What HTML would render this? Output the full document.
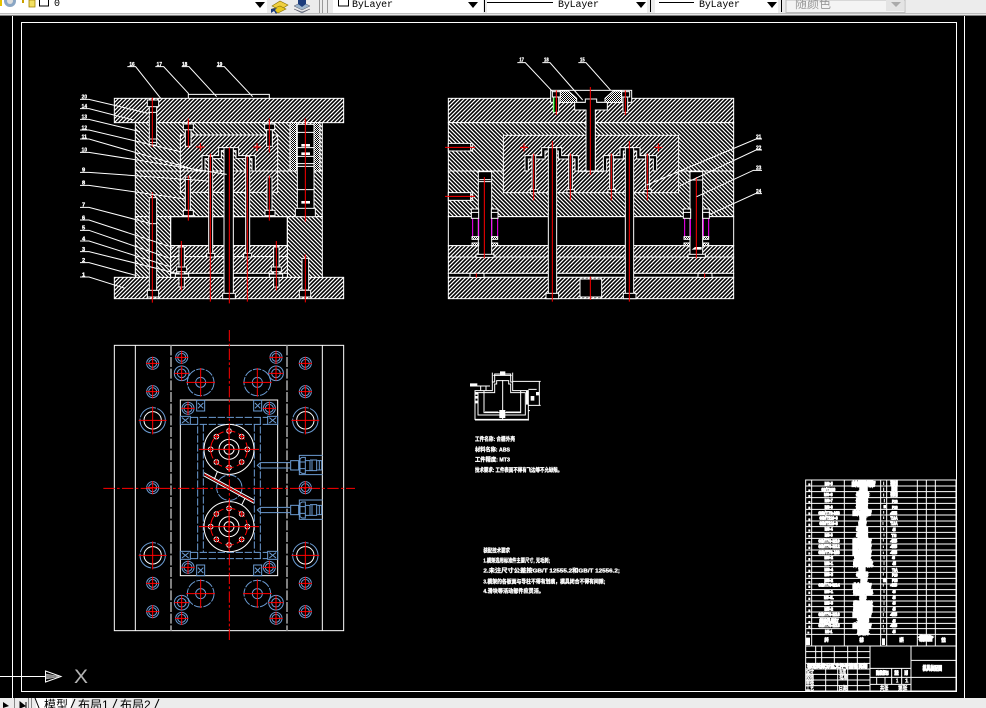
<!DOCTYPE html>
<html lang="zh">
<head>
<meta charset="utf-8">
<title>CAD</title>
<style>
html,body{margin:0;padding:0;width:986px;height:708px;overflow:hidden;background:#000}
svg{display:block}
.w{fill:none;stroke:#fff;stroke-width:3}
.k{fill:#000;stroke:#fff;stroke-width:3}
.h1{fill:url(#a);stroke:#fff;stroke-width:3}
.h2{fill:url(#b);stroke:#fff;stroke-width:3}
.d{fill:url(#c);stroke:#fff;stroke-width:3}
.r{fill:none;stroke:#f00;stroke-width:3}
.m{fill:none;stroke:#f0f;stroke-width:3}
.bl{fill:none;stroke:#6b9bd2;stroke-width:3}
.bd{fill:none;stroke:#6b9bd2;stroke-width:3;stroke-dasharray:22 5}
.cd{fill:none;stroke:#f00;stroke-width:3;stroke-dasharray:34 7 8 7}
.t{fill:#fff;stroke:#fff;stroke-width:1;font-family:"Liberation Sans","Noto Sans CJK SC",sans-serif;font-weight:700;font-size:17px}
.b{fill:#fff;stroke:#fff;stroke-width:3;font-family:"Liberation Sans","Noto Sans CJK SC",sans-serif;font-weight:700;font-size:14px}
.c{fill:#fff;stroke:#fff;stroke-width:7;font-family:"Liberation Sans","Noto Sans CJK SC",sans-serif;font-weight:700;font-size:13px}
.tb{font-family:"Liberation Mono","Noto Sans CJK SC",monospace;font-size:10px;fill:#000}
.tab{font-family:"Liberation Sans","Noto Sans CJK SC",sans-serif;font-size:12px;fill:#000}
</style>
</head>
<body>
<svg width="986" height="708" viewBox="0 0 986 708" xmlns="http://www.w3.org/2000/svg">
<defs>
<pattern id="a" patternUnits="userSpaceOnUse" width="12" height="12"><rect width="12" height="12" fill="#000"/><path d="M-3 3L3-3M0 12L12 0M9 15L15 9" stroke="#fff" stroke-width="3.6"/></pattern>
<pattern id="b" patternUnits="userSpaceOnUse" width="12" height="12"><rect width="12" height="12" fill="#000"/><path d="M-3 9L3 15M0 0L12 12M9-3L15 3" stroke="#fff" stroke-width="3.6"/></pattern>
<pattern id="c" patternUnits="userSpaceOnUse" width="6" height="6"><rect width="6" height="6" fill="#000"/><path d="M0 0h3v3h-3zM3 3h3v3h-3z" fill="#fff"/></pattern>
<g id="sb"><circle r="18" class="bl"/><circle r="12" class="bl"/><path class="r" d="M-20 0H20M0-20V20"/></g>
<g id="sb2"><circle r="22" class="bl"/><circle r="13" class="bl"/><path class="r" d="M-22 0H22M0-22V22"/></g>
<g id="big"><circle r="38" class="bl" stroke-dasharray="60 4"/><circle r="26" class="w"/><path class="r" d="M-42 0H42M0-42V42"/></g>
<g id="ret"><circle r="40" class="bl" stroke-dasharray="25 4"/><circle r="15" class="bl"/><path class="r" d="M-43 0H43M0-43V43"/></g>
<g id="hole"><circle r="7" class="k"/><path class="r" d="M-9 0H9M0-9V9"/></g>
<g id="pad"><rect x="-12" y="-16" width="24" height="32" class="bl" stroke-width="4"/><path class="bl" d="M-8-8L8 8M8-8L-8 8"/></g>
<g id="padh"><rect x="-15" y="-12" width="30" height="24" class="bl"/><path class="bl" d="M-10-8L10 8M10-8L-10 8"/></g>
<g id="gate">
<circle r="75" class="w"/><circle r="30" class="w"/><circle r="15" class="w"/>
<circle r="55" class="r" stroke-dasharray="26 10"/>
<path class="r" d="M-90 0H90M0-68V68"/>
<use href="#hole" x="55" y="0"/><use href="#hole" x="-55" y="0"/><use href="#hole" x="0" y="55"/><use href="#hole" x="0" y="-55"/>
<use href="#hole" x="38" y="38"/><use href="#hole" x="-38" y="38"/><use href="#hole" x="38" y="-38"/><use href="#hole" x="-38" y="-38"/>
</g>
<g id="conn">
<path class="bl" d="M481 20L472 28L481 36H570M481 20H570"/>
<rect x="572" y="14" width="24" height="28" class="bl" stroke-width="6"/>
<path class="bl" d="M668-2H598V56H668"/>
<path class="bl" d="M600 8L606 4H616V52H606L600 48ZM600 18H616M600 38H616M616 14H630V44H616M630 12H650V44H630M636 12V44M652 14H665V42H652M658 14V42"/>
</g>
</defs>

<rect width="986" height="708" fill="#000"/>

<!-- Frame -->
<rect x="21.5" y="22.5" width="935" height="669" fill="none" stroke="#fff"/>
<path d="M12.5 16V698M964.5 16V698" stroke="#fff"/>
<!-- UCS -->
<path d="M0 676.5H45.5" stroke="#fff"/>
<path d="M45.5 671V682L61 676.5Z" fill="none" stroke="#fff"/>
<path d="M46 674L60 676.5L46 679" fill="#888" stroke="#ccc" stroke-width=".6"/>
<text x="74" y="683" font-family="Liberation Sans,sans-serif" font-size="19" fill="#fff" fill-opacity=".7" textLength="14" lengthAdjust="spacingAndGlyphs">X</text>

<!-- LEFT SECTION -->
<g transform="translate(70 55) scale(.33333)">
<rect x="133" y="130" width="688" height="73" class="h1"/>
<rect x="133" y="667" width="688" height="64" class="h1"/>
<rect x="196" y="203" width="561" height="145" class="h2"/>
<rect x="196" y="348" width="561" height="137" class="h2"/>
<rect x="196" y="485" width="106" height="182" class="h2"/>
<rect x="652" y="485" width="105" height="182" class="h2"/>
<rect x="302" y="485" width="350" height="87" fill="#000" class="w"/>
<rect x="302" y="572" width="350" height="33" class="h1"/>
<rect x="302" y="605" width="350" height="50" class="h1"/>
<rect x="302" y="655" width="350" height="12" class="k"/>
<rect x="331" y="240" width="292" height="172" class="h1"/>
<path class="w" d="M196 348H757"/>
<path class="k" d="M396 348V302H446V278H506V302H556V348Z"/>
<path class="h2" d="M405 348V311H454V287H498V311H546V348Z"/>
<path class="w" d="M400 412H556"/>
<rect x="462" y="278" width="28" height="448" class="k"/>
<rect x="458" y="715" width="38" height="16" class="k"/>
<rect x="416" y="304" width="12" height="294" class="k"/><rect x="410" y="595" width="24" height="11" class="k"/>
<rect x="527" y="304" width="12" height="294" class="k"/><rect x="521" y="595" width="24" height="11" class="k"/>
<!-- bolts -->
<rect x="238" y="152" width="22" height="118" class="k"/><rect x="232" y="135" width="34" height="20" class="k"/><path class="w" d="M238 172H260M240 252H258M240 262H258"/>
<rect x="238" y="428" width="22" height="280" class="k"/><rect x="232" y="706" width="34" height="20" class="k"/><path class="w" d="M238 506H260"/>
<rect x="346" y="224" width="17" height="50" class="k"/><rect x="340" y="207" width="30" height="17" class="k"/>
<rect x="590" y="224" width="17" height="50" class="k"/><rect x="584" y="207" width="30" height="17" class="k"/>
<rect x="346" y="366" width="15" height="100" class="k"/><rect x="340" y="466" width="30" height="16" class="k"/>
<rect x="591" y="366" width="15" height="100" class="k"/><rect x="585" y="466" width="30" height="16" class="k"/>
<rect x="327" y="576" width="16" height="120" class="k"/><rect x="320" y="636" width="30" height="14" class="k"/><rect x="316" y="657" width="40" height="10" class="k"/>
<rect x="611" y="576" width="16" height="120" class="k"/><rect x="604" y="636" width="30" height="14" class="k"/><rect x="598" y="657" width="40" height="10" class="k"/>
<rect x="696" y="610" width="20" height="95" class="k"/><rect x="688" y="706" width="34" height="20" class="k"/>
<!-- spring guide column -->
<rect x="660" y="203" width="20" height="145" class="d"/>
<rect x="732" y="203" width="18" height="145" class="d"/>
<rect x="682" y="208" width="50" height="256" class="k"/>
<rect x="676" y="460" width="60" height="25" class="k"/>
<path class="w" d="M682 232H732M682 278H732M682 304H732M682 326H732M682 334H732M682 404H732"/>
<path d="M694 275h26v-8h-26zM694 300h26v-8h-26zM694 446h26v-8h-26z" fill="#fff"/>
<!-- red center lines -->
<path class="r" d="M247 128V276M247 412V743M355 190V278M355 362V497M598 190V292M598 362V497M421 296V740M478 278V745M532 304V740M706 190V500M706 598V742M334 558V706M619 558V706"/>
<path class="r" d="M378 276H404M391 264V288M549 276H573M561 264V288"/>
<!-- leaders -->
<path class="w" stroke-width="2.5" d="M172 35H197L272 130M256 35H281L355 115V130M355 118H598V130M335 35H357L440 125M440 35H463L548 125
M30 133H57L235 175M30 161H57L190 195M30 193H57L210 230M30 225H57L330 290M30 252H57L395 350M30 292H57L470 358M30 352H57L415 378M30 391H57L345 432M30 457H57L240 505M30 495H57L310 578M30 526H57L300 610M30 558H57L300 635M30 590H57L320 655M30 623H57L200 662M30 666H57L165 700"/>
<text class="t" x="178" y="33" textLength="16" lengthAdjust="spacingAndGlyphs">16</text>
<text class="t" x="260" y="33" textLength="16" lengthAdjust="spacingAndGlyphs">17</text>
<text class="t" x="336" y="33" textLength="16" lengthAdjust="spacingAndGlyphs">18</text>
<text class="t" x="441" y="33" textLength="16" lengthAdjust="spacingAndGlyphs">19</text>
<text class="t" x="35" y="131" textLength="16" lengthAdjust="spacingAndGlyphs">20</text>
<text class="t" x="35" y="159" textLength="16" lengthAdjust="spacingAndGlyphs">14</text>
<text class="t" x="35" y="191" textLength="16" lengthAdjust="spacingAndGlyphs">13</text>
<text class="t" x="35" y="223" textLength="16" lengthAdjust="spacingAndGlyphs">12</text>
<text class="t" x="35" y="250" textLength="16" lengthAdjust="spacingAndGlyphs">11</text>
<text class="t" x="35" y="290" textLength="16" lengthAdjust="spacingAndGlyphs">10</text>
<text class="t" x="36" y="350">9</text><text class="t" x="36" y="389">8</text><text class="t" x="36" y="455">7</text><text class="t" x="36" y="493">6</text><text class="t" x="36" y="524">5</text><text class="t" x="36" y="556">4</text><text class="t" x="36" y="588">3</text><text class="t" x="36" y="621">2</text><text class="t" x="36" y="664">1</text>
</g>

<!-- RIGHT SECTION -->
<g transform="translate(440 55) scale(.33333)">
<rect x="25" y="130" width="856" height="73" class="h1"/>
<rect x="25" y="203" width="856" height="145" class="h2"/>
<rect x="25" y="348" width="856" height="137" class="h2"/>
<rect x="25" y="485" width="856" height="87" class="k"/>
<rect x="25" y="572" width="856" height="34" class="h1"/>
<rect x="25" y="606" width="856" height="49" class="h1"/>
<rect x="25" y="655" width="856" height="12" class="k"/>
<rect x="25" y="667" width="856" height="64" class="h1"/>
<rect x="190" y="241" width="526" height="172" class="h1"/>
<path class="w" d="M25 348H190M716 348H881"/>
<path class="k" d="M255 348V302H305V278H365V302H415V348H490V302H540V278H600V302H650V348H640V312H590V288H550V312H500V348H405V312H355V288H315V312H265V348Z"/>
<!-- sprue/locating ring -->
<rect x="332" y="106" width="243" height="36" class="k"/>
<path class="d" d="M360 108H385L410 130V142H360ZM545 108H520L495 130V142H545Z"/>
<path class="k" d="M404 142V165H438V348H466V165H502V142H470V132H436V142Z"/>
<rect x="337" y="110" width="24" height="16" class="k"/><rect x="545" y="110" width="24" height="16" class="k"/>
<rect x="340" y="126" width="16" height="46" class="k"/><rect x="549" y="126" width="14" height="46" class="k"/>
<path stroke="#0f0" stroke-width="3" d="M342 128V172"/>
<rect x="415" y="348" width="75" height="1" class="w"/>
<!-- side ports -->
<path class="k" d="M25 265H92V288H25Z"/><path class="w" d="M92 265H98V288H92"/>
<path class="k" d="M25 413H92V436H25Z"/><path class="w" d="M92 411H98V436H92"/>
<!-- guide posts -->
<rect x="115" y="350" width="40" height="250" class="k"/><rect x="108" y="598" width="54" height="9" class="k"/><path class="w" d="M115 380H155M118 374H152"/>
<rect x="750" y="350" width="38" height="250" class="k"/><rect x="744" y="598" width="52" height="9" class="k"/><path class="w" d="M750 375H788"/>
<path d="M755 584h30v-8h-20z" fill="#fff"/>
<!-- springs -->
<path class="m" d="M98 490V545M116 490V545M155 490V545M173 490V545M734 490V545M751 490V545M790 490V545M806 490V545"/>
<rect x="94" y="462" width="22" height="28" class="k"/><rect x="154" y="462" width="20" height="28" class="k"/><rect x="730" y="462" width="22" height="28" class="k"/><rect x="788" y="462" width="20" height="28" class="k"/>
<path class="w" d="M94 472H116M154 472H174M730 472H752M788 472H808"/>
<rect x="96" y="545" width="20" height="8" class="d"/><rect x="155" y="545" width="18" height="8" class="d"/><rect x="732" y="545" width="18" height="8" class="d"/><rect x="790" y="545" width="16" height="8" class="d"/>
<rect x="96" y="564" width="20" height="8" class="d"/><rect x="155" y="564" width="18" height="8" class="d"/><rect x="732" y="564" width="18" height="8" class="d"/><rect x="790" y="564" width="16" height="8" class="d"/>
<!-- large ejector pillars -->
<rect x="325" y="278" width="25" height="438" class="k"/><rect x="318" y="715" width="38" height="16" class="k"/>
<rect x="556" y="278" width="25" height="438" class="k"/><rect x="550" y="715" width="38" height="16" class="k"/>
<!-- small pins -->
<rect x="276" y="300" width="11" height="106" class="k"/><rect x="271" y="404" width="22" height="9" class="k"/>
<rect x="386" y="300" width="11" height="106" class="k"/><rect x="381" y="404" width="22" height="9" class="k"/>
<rect x="509" y="300" width="11" height="106" class="k"/><rect x="504" y="404" width="22" height="9" class="k"/>
<rect x="617" y="300" width="11" height="106" class="k"/><rect x="612" y="404" width="22" height="9" class="k"/>
<rect x="420" y="672" width="65" height="54" class="k"/>
<path class="k" d="M90 655H132V667H90ZM774 655H816V667H774Z"/>
<!-- red -->
<path class="r" d="M337 258V740M568 258V740M451 96V360M451 664V735M133 366V610M769 366V610M281 296V436M391 296V436M514 296V436M622 296V436M349 106V180M556 106V180M109 655V668M794 655V668"/>
<path class="r" d="M15 277H105M15 424H105M240 277H264M252 265V289M643 277H667M655 265V289"/>
<!-- leaders -->
<path class="w" stroke-width="2.5" d="M232 23H256L338 110M307 23H330L428 135M415 23H438L512 106M966 252H948L620 390M966 285H948L720 392M966 346H940L770 425M966 416H946L810 478"/>
<text class="t" x="238" y="20" textLength="14" lengthAdjust="spacingAndGlyphs">17</text>
<text class="t" x="312" y="20" textLength="14" lengthAdjust="spacingAndGlyphs">18</text>
<text class="t" x="420" y="20" textLength="14" lengthAdjust="spacingAndGlyphs">15</text>
<text class="t" x="948" y="250" textLength="16" lengthAdjust="spacingAndGlyphs">21</text>
<text class="t" x="948" y="283" textLength="16" lengthAdjust="spacingAndGlyphs">22</text>
<text class="t" x="948" y="344" textLength="16" lengthAdjust="spacingAndGlyphs">23</text>
<text class="t" x="948" y="414" textLength="16" lengthAdjust="spacingAndGlyphs">24</text>
</g>

<!-- PLAN VIEW -->
<g transform="translate(100 330) scale(.33333)">
<rect x="43" y="46" width="688" height="856" class="w"/>
<path class="w" d="M106 46V902M667 46V902"/>
<path d="M213 46V902M561 46V902" stroke="#808080" stroke-width="6" stroke-dasharray="30 5" fill="none"/>
<rect x="241" y="210" width="292" height="527" class="w"/>
<path class="bd" d="M293 262V686M310 283V666M463 283V666M481 262V686M272 262H503M272 283H503M272 667H503M272 686H503"/>
<circle cx="388" cy="473" r="38" class="bl" stroke-dasharray="30 4"/>
<use href="#gate" x="387" y="358"/>
<use href="#gate" x="387" y="590"/>
<path class="w" d="M312 428L462 510M312 438L462 520M352 425L342 450M425 525L435 505"/>
<path class="r" d="M314 433L460 515" stroke-width="4"/>
<path class="cd" d="M388 0V930M10 475H765" stroke-width="3.6"/>
<use href="#sb" x="158" y="100"/><use href="#sb" x="158" y="185"/><use href="#sb" x="158" y="473"/><use href="#sb" x="158" y="760"/><use href="#sb" x="158" y="845"/>
<use href="#sb" x="616" y="100"/><use href="#sb" x="616" y="185"/><use href="#sb" x="616" y="473"/><use href="#sb" x="616" y="760"/><use href="#sb" x="616" y="845"/>
<use href="#sb" x="245" y="82"/><use href="#sb" x="528" y="82"/><use href="#sb" x="245" y="865"/><use href="#sb" x="528" y="865"/>
<use href="#sb2" x="245" y="130"/><use href="#sb2" x="528" y="130"/><use href="#sb2" x="245" y="818"/><use href="#sb2" x="528" y="818"/>
<use href="#sb" x="264" y="235"/><use href="#sb" x="508" y="235"/><use href="#sb" x="264" y="712"/><use href="#sb" x="508" y="712"/>
<use href="#big" x="158" y="271"/><use href="#big" x="616" y="271"/><use href="#big" x="158" y="676"/><use href="#big" x="616" y="676"/>
<use href="#ret" x="302" y="157"/><use href="#ret" x="472" y="157"/><use href="#ret" x="302" y="791"/><use href="#ret" x="472" y="791"/>
<use href="#pad" x="302" y="227"/><use href="#pad" x="473" y="227"/><use href="#pad" x="302" y="721"/><use href="#pad" x="473" y="721"/>
<use href="#padh" x="256" y="271"/><use href="#padh" x="518" y="271"/><use href="#padh" x="256" y="676"/><use href="#padh" x="518" y="676"/>
<use href="#conn" x="0" y="378"/><use href="#conn" x="0" y="512"/>
</g>

<!-- PART + NOTES -->
<g transform="translate(460 370) scale(.33333)">
<path class="w" d="M45 148V62H97V36H104V12H152V36H158V62H205V148Z"/>
<path class="w" d="M54 135V68H104V42H110V32H146V42H152V68H196V135Z"/>
<path class="w" d="M97 8V36M158 8V36M100 16H155M158 34H242M205 106H242M238 34V106M205 58H230M205 122H210M45 150H207M72 62V128H182V62M75 126H115M138 126H182M128 30V148"/>
<path d="M120 4h16v12h-16zM30 40h22v7H30zM46 66h8v8h-8zM46 78h8v8h-8zM46 92h8v8h-8zM212 78h11v14h-11zM228 66h10v10h-10zM118 120h18v24h-18zM198 62h7v42h-7z" fill="#fff"/>
<path class="w" d="M62 48V62M78 48V62M30 48H90"/>
<text class="t" x="45" y="213" textLength="120" lengthAdjust="spacingAndGlyphs">工件名称: 合棚外壳</text>
<text class="t" x="45" y="244" textLength="105" lengthAdjust="spacingAndGlyphs">材料名称: ABS</text>
<text class="t" x="45" y="275" textLength="105" lengthAdjust="spacingAndGlyphs">工件精度: MT3</text>
<text class="t" x="45" y="306" textLength="262" lengthAdjust="spacingAndGlyphs">技术要求: 工件表面不得有飞边等不允缺陷。</text>
<text class="t" x="70" y="547" textLength="80" lengthAdjust="spacingAndGlyphs">装配技术要求</text>
<text class="t" x="70" y="578" textLength="200" lengthAdjust="spacingAndGlyphs">1.模架选用标准件主要尺寸, 无毛刺;</text>
<text class="t" x="70" y="608" textLength="410" lengthAdjust="spacingAndGlyphs">2.未注尺寸公差按GB/T 12555.2和GB/T 12556.2;</text>
<text class="t" x="70" y="640" textLength="366" lengthAdjust="spacingAndGlyphs">3.模架的各板面与导柱不得有划痕，模具闭合不得有间隙;</text>
<text class="t" x="70" y="669" textLength="182" lengthAdjust="spacingAndGlyphs">4.滑块等活动部件应灵活。</text>
</g>

<!-- TITLE BLOCK -->
<g transform="translate(800 475) scale(.33333)">
<rect x="17" y="15" width="451" height="633" class="w"/>
<path class="w" d="M17 33H468M17 50H468M17 68H468M17 85H468M17 103H468M17 120H468M17 138H468M17 155H468M17 172H468M17 190H468M17 207H468M17 225H468M17 242H468M17 258H468M17 275H468M17 292H468M17 310H468M17 327H468M17 344H468M17 361H468M17 378H468M17 395H468M17 411H468M17 428H468M17 445H468M17 461H468M17 478H468"/>
<path class="k" d="M17 513H468"/>
<path class="w" d="M35 15V513M133 15V513M242 15V513M260 15V513M352 15V513M379 15V513M406 15V513"/>
<path class="w" d="M17 530H210M17 548H210M17 565H210M17 582H210M17 598H210M17 615H210M17 632H210M47 513V565M77 582V648M65 513V565M103 513V565M113 565V648M143 513V648M172 513V648M210 513V648M333 513V648M210 580H333M210 607H333M210 628H333M275 580V628M305 580V628M230 607V628M255 607V628M333 556H468M333 607H468"/>
<text class="b" x="74" y="30" textLength="24" lengthAdjust="spacingAndGlyphs">M8-5</text><text class="c" x="156" y="32" textLength="69" lengthAdjust="spacingAndGlyphs">内六角圆柱头螺钉</text><text class="b" x="271" y="30" textLength="22" lengthAdjust="spacingAndGlyphs">碳素钢</text>
<text class="b" x="64" y="48" textLength="42" lengthAdjust="spacingAndGlyphs">GB/T2089</text><text class="c" x="180" y="50" textLength="21" lengthAdjust="spacingAndGlyphs">弹簧</text><text class="b" x="274" y="47" textLength="18" lengthAdjust="spacingAndGlyphs">弹钢</text>
<text class="b" x="72" y="63" textLength="26" lengthAdjust="spacingAndGlyphs">M8-8</text><text class="c" x="171" y="64" textLength="33" lengthAdjust="spacingAndGlyphs">导套</text><text class="b" x="271" y="63" textLength="22" lengthAdjust="spacingAndGlyphs">碳素钢</text>
<text class="b" x="74" y="81" textLength="24" lengthAdjust="spacingAndGlyphs">M8-7</text><text class="c" x="171" y="83" textLength="30" lengthAdjust="spacingAndGlyphs">型腔</text><text class="b" x="276" y="84" textLength="17" lengthAdjust="spacingAndGlyphs">P20</text>
<text class="b" x="74" y="100" textLength="24" lengthAdjust="spacingAndGlyphs">M8-6</text><text class="c" x="171" y="101" textLength="30" lengthAdjust="spacingAndGlyphs">型芯</text><text class="b" x="276" y="102" textLength="17" lengthAdjust="spacingAndGlyphs">P20</text>
<text class="b" x="55" y="118" textLength="64" lengthAdjust="spacingAndGlyphs">GB/T70-M8</text><text class="c" x="159" y="118" textLength="54" lengthAdjust="spacingAndGlyphs">内六角螺钉</text><text class="b" x="271" y="118" textLength="20" lengthAdjust="spacingAndGlyphs">45</text>
<text class="b" x="58" y="133" textLength="55" lengthAdjust="spacingAndGlyphs">GB/T119-6</text><text class="c" x="180" y="135" textLength="18" lengthAdjust="spacingAndGlyphs">销钉</text><text class="b" x="271" y="133" textLength="22" lengthAdjust="spacingAndGlyphs">T10A</text>
<text class="b" x="58" y="150" textLength="55" lengthAdjust="spacingAndGlyphs">GB/T119-8</text><text class="c" x="177" y="152" textLength="21" lengthAdjust="spacingAndGlyphs">销钉</text><text class="b" x="271" y="150" textLength="22" lengthAdjust="spacingAndGlyphs">T10A</text>
<text class="b" x="74" y="167" textLength="24" lengthAdjust="spacingAndGlyphs">M8-4</text><text class="c" x="171" y="168" textLength="30" lengthAdjust="spacingAndGlyphs">导柱</text><text class="b" x="277" y="168" textLength="10" lengthAdjust="spacingAndGlyphs">45</text>
<text class="b" x="74" y="184" textLength="24" lengthAdjust="spacingAndGlyphs">M8-3</text><text class="c" x="171" y="186" textLength="30" lengthAdjust="spacingAndGlyphs">导柱</text><text class="b" x="274" y="186" textLength="15" lengthAdjust="spacingAndGlyphs">T8</text>
<text class="b" x="55" y="202" textLength="64" lengthAdjust="spacingAndGlyphs">GB/T70-M10</text><text class="c" x="159" y="204" textLength="54" lengthAdjust="spacingAndGlyphs">内六角螺钉</text><text class="b" x="271" y="202" textLength="20" lengthAdjust="spacingAndGlyphs">45</text>
<text class="b" x="55" y="219" textLength="64" lengthAdjust="spacingAndGlyphs">GB/T70-M12</text><text class="c" x="159" y="221" textLength="54" lengthAdjust="spacingAndGlyphs">内六角螺钉</text><text class="b" x="271" y="219" textLength="20" lengthAdjust="spacingAndGlyphs">45</text>
<text class="b" x="55" y="237" textLength="64" lengthAdjust="spacingAndGlyphs">GB/T70-M6</text><text class="c" x="159" y="238" textLength="54" lengthAdjust="spacingAndGlyphs">内六角螺钉</text><text class="b" x="271" y="237" textLength="20" lengthAdjust="spacingAndGlyphs">45</text>
<text class="b" x="73" y="252" textLength="26" lengthAdjust="spacingAndGlyphs">M8-2</text><text class="c" x="165" y="254" textLength="45" lengthAdjust="spacingAndGlyphs">定模板</text><text class="b" x="276" y="252" textLength="9" lengthAdjust="spacingAndGlyphs">45</text>
<text class="b" x="73" y="270" textLength="26" lengthAdjust="spacingAndGlyphs">M8-1</text><text class="c" x="162" y="272" textLength="54" lengthAdjust="spacingAndGlyphs">动模垫板</text><text class="b" x="277" y="270" textLength="11" lengthAdjust="spacingAndGlyphs">45</text>
<text class="b" x="73" y="288" textLength="26" lengthAdjust="spacingAndGlyphs">M6-4</text><text class="c" x="177" y="289" textLength="18" lengthAdjust="spacingAndGlyphs">垫圈</text><text class="b" x="276" y="289" textLength="17" lengthAdjust="spacingAndGlyphs">T8A</text>
<text class="b" x="73" y="303" textLength="26" lengthAdjust="spacingAndGlyphs">M6-3</text><text class="c" x="171" y="305" textLength="30" lengthAdjust="spacingAndGlyphs">导套</text><text class="b" x="276" y="305" textLength="17" lengthAdjust="spacingAndGlyphs">P20</text>
<text class="b" x="73" y="321" textLength="26" lengthAdjust="spacingAndGlyphs">M6-2</text><text class="c" x="183" y="323" textLength="18" lengthAdjust="spacingAndGlyphs">螺钉</text><text class="b" x="276" y="321" textLength="17" lengthAdjust="spacingAndGlyphs">P20</text>
<text class="b" x="55" y="335" textLength="64" lengthAdjust="spacingAndGlyphs">GB/T70-M14</text><text class="c" x="159" y="337" textLength="54" lengthAdjust="spacingAndGlyphs">内六角螺钉</text><text class="b" x="271" y="335" textLength="20" lengthAdjust="spacingAndGlyphs">45</text>
<text class="b" x="73" y="354" textLength="26" lengthAdjust="spacingAndGlyphs">M6-1</text><text class="c" x="162" y="355" textLength="54" lengthAdjust="spacingAndGlyphs">动模支架</text><text class="b" x="277" y="354" textLength="10" lengthAdjust="spacingAndGlyphs">45</text>
<text class="b" x="72" y="372" textLength="29" lengthAdjust="spacingAndGlyphs">M5-4L</text><text class="c" x="180" y="373" textLength="18" lengthAdjust="spacingAndGlyphs">推杆</text><text class="b" x="277" y="372" textLength="10" lengthAdjust="spacingAndGlyphs">45</text>
<text class="b" x="73" y="389" textLength="26" lengthAdjust="spacingAndGlyphs">M5-3</text><text class="c" x="162" y="391" textLength="54" lengthAdjust="spacingAndGlyphs">推杆固定板</text><text class="b" x="277" y="389" textLength="10" lengthAdjust="spacingAndGlyphs">45</text>
<text class="b" x="73" y="406" textLength="26" lengthAdjust="spacingAndGlyphs">M5-2</text><text class="c" x="162" y="408" textLength="54" lengthAdjust="spacingAndGlyphs">推板导柱固</text><text class="b" x="277" y="406" textLength="10" lengthAdjust="spacingAndGlyphs">45</text>
<text class="b" x="55" y="423" textLength="64" lengthAdjust="spacingAndGlyphs">GB/T70-M16</text><text class="c" x="159" y="425" textLength="54" lengthAdjust="spacingAndGlyphs">内六角螺钉</text><text class="b" x="271" y="423" textLength="20" lengthAdjust="spacingAndGlyphs">45</text>
<text class="b" x="58" y="443" textLength="58" lengthAdjust="spacingAndGlyphs">螺纹孔螺钉</text><text class="c" x="174" y="443" textLength="30" lengthAdjust="spacingAndGlyphs">顶杆</text><text class="b" x="277" y="443" textLength="10" lengthAdjust="spacingAndGlyphs">45</text>
<text class="b" x="55" y="456" textLength="64" lengthAdjust="spacingAndGlyphs">GB/T70-M18</text><text class="c" x="159" y="458" textLength="54" lengthAdjust="spacingAndGlyphs">内六角螺钉</text><text class="b" x="271" y="456" textLength="20" lengthAdjust="spacingAndGlyphs">45</text>
<text class="b" x="75" y="474" textLength="22" lengthAdjust="spacingAndGlyphs">M5-1</text><text class="c" x="174" y="476" textLength="30" lengthAdjust="spacingAndGlyphs">底板</text><text class="b" x="277" y="474" textLength="10" lengthAdjust="spacingAndGlyphs">45</text>
<!-- index column -->
<path stroke="#fff" stroke-width="6" fill="none" d="M28 25V32M28 43V50M28 60V67M28 78V85M28 95V102M28 112V119M28 130V137M28 146V153M28 163V170M28 180V187M28 198V205M28 215V222M28 232V239M28 249V256M28 266V273M28 284V291M28 300V307M28 318V325M28 332V339M28 350V357M28 368V375M28 386V393M28 403V410M28 420V427M28 438V444M28 452V459M25 470V476"/>
<path stroke="#fff" stroke-width="3" fill="none" d="M251 20V30M251 38V48M251 55V65M253 72V82M253 92V100M251 108V116M251 124V132M249 141V150M251 158V166M252 176V184M250 192V200M250 212V219M250 230V237M252 243V252M252 260V270M252 278V286M250 294V302M250 310V320M250 326V335M252 345V354M252 362V372M252 380V390M252 398V408M250 414V424M250 434V442M250 450V458M252 464V472"/>
<path d="M250 90h8v10h-8zM249 310h10v12h-10zM246 490h9v20h-9zM18 488h12v22H18z" fill="#fff"/>
<text class="b" x="73" y="500" textLength="13" lengthAdjust="spacingAndGlyphs">序号</text><text class="b" x="178" y="500" textLength="13" lengthAdjust="spacingAndGlyphs">名称</text><text class="b" x="298" y="500" textLength="13" lengthAdjust="spacingAndGlyphs">材料</text><text class="c" x="360" y="495" textLength="36" lengthAdjust="spacingAndGlyphs">数量备</text><text class="b" x="424" y="500" textLength="13" lengthAdjust="spacingAndGlyphs">备注</text>
<text class="b" x="22" y="577" textLength="180" lengthAdjust="spacingAndGlyphs">标记处数分区文件号签名日期</text>
<text class="t" x="18" y="595" textLength="24" lengthAdjust="spacingAndGlyphs">设计</text><text class="t" x="18" y="612" textLength="24" lengthAdjust="spacingAndGlyphs">校核</text><text class="t" x="18" y="629" textLength="24" lengthAdjust="spacingAndGlyphs">审核</text><text class="t" x="18" y="645" textLength="24" lengthAdjust="spacingAndGlyphs">工艺</text>
<text class="t" x="118" y="595" textLength="20" lengthAdjust="spacingAndGlyphs">标准</text><text class="t" x="118" y="612" textLength="24" lengthAdjust="spacingAndGlyphs">批准</text><text class="t" x="116" y="645" textLength="26" lengthAdjust="spacingAndGlyphs">日期</text>
<text class="b" x="228" y="599" textLength="38" lengthAdjust="spacingAndGlyphs">阶段标记</text><text class="b" x="283" y="599" textLength="13" lengthAdjust="spacingAndGlyphs">重量</text><text class="b" x="313" y="599" textLength="11" lengthAdjust="spacingAndGlyphs">比例</text>
<text class="t" x="288" y="622" textLength="7" lengthAdjust="spacingAndGlyphs">1</text><text class="t" x="315" y="622" textLength="10" lengthAdjust="spacingAndGlyphs">1</text>
<text class="t" x="240" y="645" textLength="25" lengthAdjust="spacingAndGlyphs">共张</text><text class="t" x="294" y="645" textLength="28" lengthAdjust="spacingAndGlyphs">第张</text>
<text class="b" x="368" y="587" textLength="58" lengthAdjust="spacingAndGlyphs" style="font-size:18px">模具装配图</text>
</g>

<!-- TOP TOOLBAR -->
<rect x="0" y="0" width="986" height="13" fill="#ececec"/>
<rect x="0" y="13" width="986" height="1" fill="#bdbdbd"/>
<rect x="0" y="14" width="986" height="1" fill="#e6e6e6"/>
<rect x="0" y="15" width="986" height="1" fill="#808080"/>
<rect x="0" y="0" width="267" height="13" fill="#fff"/>
<circle cx="10" cy="1" r="6" fill="#8aa6c4"/><circle cx="10" cy="1" r="3" fill="#ddd"/>
<path d="M0 0h2v6H0z" fill="#e6c200"/>
<path d="M22 0h2v3h-2z" fill="#c9a000"/>
<path d="M29 0h6v7h-6z" fill="#f2e060" stroke="#a08000" stroke-width=".8"/>
<rect x="39.5" y="-1" width="9" height="7" fill="#fff" stroke="#000"/>
<text x="54" y="6" class="tb">0</text>
<path d="M255 2h10l-5 6z" fill="#000"/>
<!-- layer icons -->
<path d="M272 6l8-5 8 4-8 5z" fill="#f0d040" stroke="#887000" stroke-width=".6"/>
<path d="M272 9l8-3 6 3-8 4z" fill="#e8c820" stroke="#887000" stroke-width=".6"/>
<path d="M271 9l6-1-2 2 2 3-1 1-2-3-3 2z" fill="#1c3c7c"/>
<path d="M294 6l8-4 8 4-8 4z" fill="#9db5cc" stroke="#556" stroke-width=".5"/>
<path d="M294 9l8 3 8-3-8 4z" fill="#8ca4bc" stroke="#556" stroke-width=".5"/>
<path d="M298 0h8v4l-4 3-4-3z" fill="#1c3c7c"/>
<path d="M319.5 0V13M322.5 0V13M327.5 0V13" stroke="#999"/>
<rect x="333" y="0" width="150" height="13" fill="#fff"/>
<rect x="338.5" y="-1" width="10" height="7" fill="#fff" stroke="#000"/>
<text x="352" y="7" class="tb" textLength="41" lengthAdjust="spacing">ByLayer</text>
<path d="M468 2h10l-5 6z" fill="#000"/>
<path d="M484.5 0V12" stroke="#000"/>
<rect x="487" y="0" width="160" height="13" fill="#fff"/>
<path d="M487 2.5H553" stroke="#000"/>
<text x="558" y="7" class="tb" textLength="41" lengthAdjust="spacing">ByLayer</text>
<path d="M636 2h10l-5 6z" fill="#000"/>
<path d="M650.5 0V12" stroke="#000"/>
<rect x="655" y="0" width="123" height="13" fill="#fff"/>
<path d="M659 2.5H694" stroke="#000"/>
<text x="699" y="7" class="tb" textLength="41" lengthAdjust="spacing">ByLayer</text>
<path d="M767 2h10l-5 6z" fill="#000"/>
<path d="M781.5 0V12" stroke="#000"/>
<rect x="786" y="0" width="119" height="12.5" fill="#f4f4f4" stroke="#bbb"/>
<text x="795" y="8" font-family="Noto Sans CJK SC,sans-serif" font-size="12" fill="#999">随颜色</text>
<rect x="886" y="0" width="18" height="11" fill="#e4e4e4"/>
<path d="M891 2h10l-5 5z" fill="#aaa"/>

<!-- BOTTOM TABS -->
<rect x="0" y="698" width="986" height="10" fill="#ececec"/>
<path d="M14.5 698V708M28.5 698V708" stroke="#888"/>
<path d="M3 702l6 4-6 2z" fill="#000"/>
<path d="M20 702l5 4-5 2zM26 702v6" fill="#000" stroke="#000"/>
<path d="M31.5 698V708" stroke="#888"/>
<rect x="36" y="698" width="36" height="10" fill="#fff"/>
<path d="M35 698L39 708M71 708L75 699M113 708L117 699M155 708L159 699" stroke="#000" fill="none"/>
<text x="44" y="709" class="tab">模型</text>
<text x="78" y="709" class="tab">布局1</text>
<text x="120" y="709" class="tab">布局2</text>
</svg>
</body>
</html>
